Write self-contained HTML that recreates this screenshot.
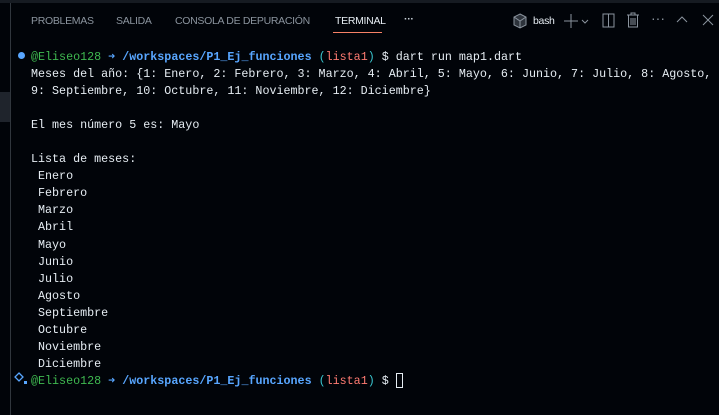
<!DOCTYPE html><html><head><meta charset="utf-8"><style>
body{margin:0;width:719px;height:415px;background:#010409;overflow:hidden;position:relative;font-family:"Liberation Sans",sans-serif}
.top{position:absolute;left:0;top:0;width:719px;height:3px;background:#161b22}
.lb{position:absolute;left:10px;top:3px;width:1px;height:412px;background:#30363d}
.tab{position:absolute;top:15px;font-size:10.5px;letter-spacing:-0.3px;color:#8b949e}
.t{position:absolute;left:31px;top:49px;font-family:"Liberation Mono",monospace;font-size:11.7px;line-height:17.05px;color:#e6edf3;white-space:pre}
.g{color:#3fb950}.b{color:#58a6ff;font-weight:bold}.c{color:#39c5cf}.r{color:#ff7b72}
.ic{position:absolute;color:#8b949e;font-size:14px}
</style></head><body>
<div class="top"></div><div class="lb"></div>
<div style="position:absolute;left:0;top:92px;width:10px;height:30px;background:#1f242c"></div>
<div class="tab" style="left:31px">PROBLEMAS</div>
<div class="tab" style="left:116px">SALIDA</div>
<div class="tab" style="left:175px">CONSOLA DE DEPURACIÓN</div>
<div class="tab" style="left:335px;color:#e6edf3">TERMINAL</div>
<div style="position:absolute;left:333px;top:32px;width:49px;height:1px;background:#f78166"></div>
<div class="tab" style="left:404px;color:#c9d1d9;top:13px;font-weight:bold">···</div>
<svg style="position:absolute;left:513px;top:13px" width="14" height="16" viewBox="0 0 14 16"><path d="M7 1L13 4V12L7 15L1 12V4Z" fill="#2d333b" stroke="#8b949e"/><path d="M7 8V15M1 4L7 8L13 4" stroke="#8b949e" fill="none"/></svg>
<div class="tab" style="left:533px;color:#e6edf3">bash</div>
<svg style="position:absolute;left:563px;top:13px" width="30" height="16"><path d="M8 1V15M1 8H15" stroke="#8b949e"/><path d="M19 7L22 10L25 7" stroke="#8b949e" fill="none"/></svg>
<svg style="position:absolute;left:602px;top:13px" width="14" height="15"><rect x="1" y="1" width="11" height="13" fill="none" stroke="#8b949e"/><path d="M6.5 1V14" stroke="#8b949e"/></svg>
<svg style="position:absolute;left:626px;top:12px" width="14" height="16"><path d="M1 3H13M5 3V1H9V3M2.5 3V15H11.5V3M5 6V13M7 6V13M9 6V13" stroke="#8b949e" fill="none"/></svg>
<div class="ic" style="left:651px;top:10px">···</div>
<svg style="position:absolute;left:676px;top:15px" width="12" height="10"><path d="M1 7L6 2L11 7" stroke="#8b949e" fill="none"/></svg>
<svg style="position:absolute;left:702px;top:14px" width="12" height="12"><path d="M1 1L11 11M11 1L1 11" stroke="#8b949e"/></svg>
<div style="position:absolute;left:18px;top:52px;width:7px;height:7px;border-radius:50%;background:#58a6ff"></div>
<svg style="position:absolute;left:14px;top:372px" width="16" height="14"><path d="M5 1L9 5L5 9L1 5Z" fill="none" stroke="#58a6ff" stroke-width="1.3"/><rect x="10" y="9" width="3" height="3" fill="#58a6ff"/></svg>
<div class="t"><span class="g">@Eliseo128</span> <span class="b">➜</span> <span class="b">/workspaces/P1_Ej_funciones</span> <span class="c">(</span><span class="r">lista1</span><span class="c">)</span> $ dart run map1.dart
Meses del año: {1: Enero, 2: Febrero, 3: Marzo, 4: Abril, 5: Mayo, 6: Junio, 7: Julio, 8: Agosto,
9: Septiembre, 10: Octubre, 11: Noviembre, 12: Diciembre}

El mes número 5 es: Mayo

Lista de meses:
 Enero
 Febrero
 Marzo
 Abril
 Mayo
 Junio
 Julio
 Agosto
 Septiembre
 Octubre
 Noviembre
 Diciembre
<span class="g">@Eliseo128</span> <span class="b">➜</span> <span class="b">/workspaces/P1_Ej_funciones</span> <span class="c">(</span><span class="r">lista1</span><span class="c">)</span> $ <span style="display:inline-block;width:7px;height:15px;border:1px solid #e6edf3;vertical-align:middle;box-sizing:border-box"></span></div>
</body></html>
